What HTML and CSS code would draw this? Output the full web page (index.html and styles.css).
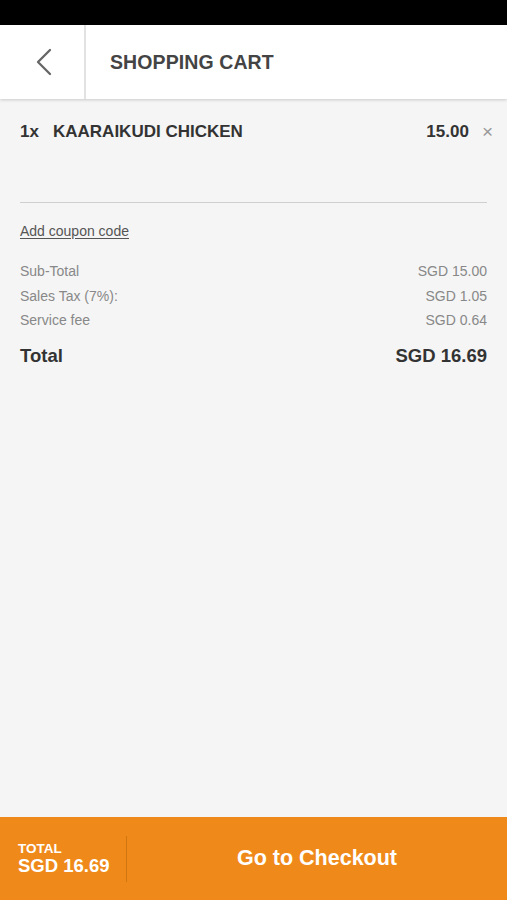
FILE: index.html
```html
<!DOCTYPE html>
<html>
<head>
<meta charset="utf-8">
<link rel="stylesheet" href="styles.css">
</head>
<body>
<div class="app">
  <div class="statusbar"></div>
  <header class="header">
    <div class="back">
      <svg width="18" height="28" viewBox="0 0 18 28"><path d="M15 2 L3 14 L15 26" fill="none" stroke="#666" stroke-width="2.3" stroke-linecap="round" stroke-linejoin="round"/></svg>
    </div>
    <h1 class="title">SHOPPING CART</h1>
  </header>
  <main class="content">
    <div class="item">
      <span class="qty">1x</span>
      <span class="name">KAARAIKUDI CHICKEN</span>
      <span class="price">15.00</span>
      <span class="remove">&times;</span>
    </div>
    <hr class="sep">
    <a class="coupon">Add coupon code</a>
    <div class="summary">
      <div class="row"><span>Sub-Total</span><span>SGD 15.00</span></div>
      <div class="row"><span>Sales Tax (7%):</span><span>SGD 1.05</span></div>
      <div class="row"><span>Service fee</span><span>SGD 0.64</span></div>
      <div class="row total"><span>Total</span><span>SGD 16.69</span></div>
    </div>
  </main>
  <footer class="footer">
    <div class="ftotal">
      <div class="flabel">TOTAL</div>
      <div class="famount">SGD 16.69</div>
    </div>
    <div class="checkout">Go to Checkout</div>
  </footer>
</div>
</body>
</html>
```
FILE: styles.css
```css
* { box-sizing: border-box; }
html, body { margin: 0; padding: 0; height: 100%; }
body { font-family: "Liberation Sans", Arial, sans-serif; background: #f5f5f5; }
.app { display: flex; flex-direction: column; height: 900px; }
.statusbar { height: 25px; background: #000; flex: none; }
.header {
  height: 74px; flex: none; background: #fff; display: flex; align-items: stretch;
  box-shadow: 0 1px 3px rgba(0,0,0,0.18); position: relative; z-index: 1;
}
.back { width: 86px; border-right: 2px solid #e2e2e2; display: flex; align-items: center; justify-content: center; padding-left: 3px; }
.back svg { display: block; }
.title { margin: 0; padding-left: 24px; display: flex; align-items: center; font-size: 19.5px; font-weight: bold; color: #444; letter-spacing: 0.1px; }
.content { flex: 1; padding: 0 20px 0 20px; }
.item { display: flex; align-items: center; height: 64px; padding-top: 2px; font-size: 17px; font-weight: bold; color: #333; }
.qty { width: 33px; }
.name { flex: 1; }
.price { margin-right: 13px; }
.remove { color: #999; font-weight: normal; font-size: 19px; margin-right: -6px; }
.sep { border: 0; border-top: 1px solid #cfcfcf; margin: 39px 0 0 0; }
.coupon { display: block; margin-top: 20px; font-size: 14px; color: #555; text-decoration: underline; text-underline-offset: 2px; }
.summary { margin-top: 20px; }
.row { display: flex; justify-content: space-between; font-size: 14px; color: #888; height: 24.5px; align-items: center; }
.row.total { margin-top: 11px; font-size: 18.5px; font-weight: bold; color: #333; }
.footer { height: 83px; flex: none; background: #ef8a1a; display: flex; align-items: center; color: #fff; }
.ftotal { width: 127px; padding-left: 18px; border-right: 1px solid rgba(150,80,0,0.35); height: 46px; display: flex; flex-direction: column; justify-content: center; font-weight: bold; }
.flabel { font-size: 13.5px; line-height: 15px; }
.famount { font-size: 18.5px; line-height: 20px; }
.checkout { flex: 1; text-align: center; font-size: 21.5px; font-weight: bold; }
```
